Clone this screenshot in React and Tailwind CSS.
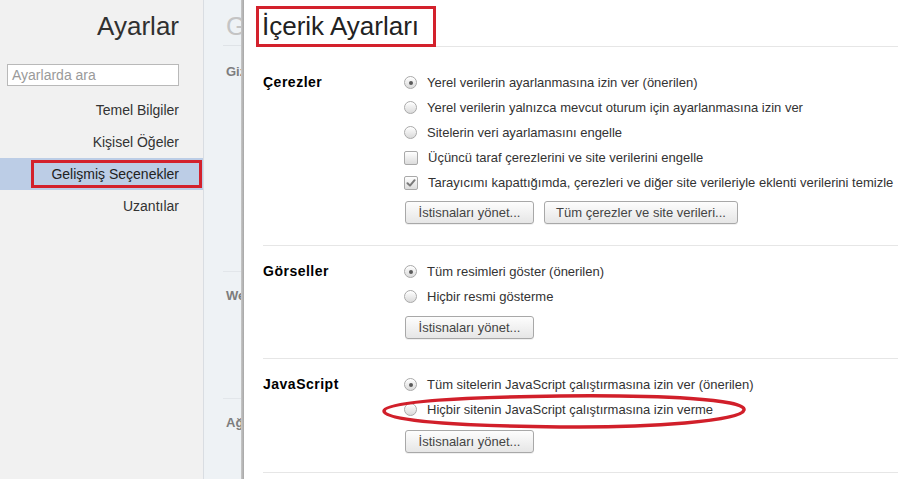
import React from "react";

const font = { fontFamily: '"Liberation Sans", Arial, sans-serif' };

function Radio({ checked }) {
  return (
    <span className="relative flex h-[13px] w-[13px] shrink-0 items-center justify-center rounded-full border border-[#a9a9a9] bg-gradient-to-b from-[#ffffff] to-[#dadada] shadow-[inset_0_1px_0_#fff]">
      {checked && <span className="h-[4px] w-[4px] rounded-full bg-[#5a5a5a]" />}
    </span>
  );
}

function Check({ checked }) {
  return (
    <span className="relative flex h-[14px] w-[14px] shrink-0 items-center justify-center rounded-[2px] border border-[#a9a9a9] bg-gradient-to-b from-[#ffffff] to-[#dcdcdc]">
      {checked && (
        <svg width="10" height="10" viewBox="0 0 10 10">
          <path d="M1.5 5.2 L4 7.6 L8.6 2.2" fill="none" stroke="#7a7a7a" strokeWidth="2" strokeLinecap="round" strokeLinejoin="round" />
        </svg>
      )}
    </span>
  );
}

function Option({ type = "radio", checked, children }) {
  return (
    <div className="flex h-[25px] items-center gap-[10px] whitespace-nowrap text-[13px] text-[#333]">
      {type === "radio" ? <Radio checked={checked} /> : <Check checked={checked} />}
      <span>{children}</span>
    </div>
  );
}

function Button({ children, w }) {
  return (
    <div
      className={`flex h-[23px] items-center justify-center rounded-[3px] border border-[#a8a8a8] bg-gradient-to-b from-[#fdfdfd] to-[#e6e6e6] text-[13px] text-[#444] shadow-[0_1px_0_rgba(0,0,0,0.06)] ${w}`}
    >
      {children}
    </div>
  );
}

function Section({ label, pt, btnMt, pb, children, buttons }) {
  return (
    <div className={`ml-[19px] flex border-b border-[#e6e6e6] ${pt} ${pb}`}>
      <div className="flex h-[25px] w-[141px] shrink-0 items-center text-[14px] font-bold tracking-[0.5px] text-black">
        {label}
      </div>
      <div className="flex flex-col">
        {children}
        <div className={`ml-[1px] flex gap-[10px] ${btnMt}`}>{buttons}</div>
      </div>
    </div>
  );
}

export default function App() {
  return (
    <div style={font} className="relative flex h-[479px] w-[898px] overflow-hidden bg-white">
      {/* Sidebar */}
      <div className="flex w-[204px] shrink-0 flex-col border-r border-[#d9dde2] bg-[#f1f1f1] pt-[11px]">
        <div className="pr-[24px] text-right text-[26px] leading-[30px] text-[#303030]">Ayarlar</div>
        <div className="ml-[7px] mt-[23px] flex h-[22px] w-[172px] items-center border border-[#b9b9b9] bg-white pl-[4px] text-[14px] text-[#9a9a9a]">
          Ayarlarda ara
        </div>
        <div className="mt-[8px] flex flex-col text-[14px] text-[#333]">
          <div className="flex h-[32px] items-center justify-end pr-[24px]">Temel Bilgiler</div>
          <div className="flex h-[32px] items-center justify-end pr-[24px]">Kişisel Öğeler</div>
          <div className="flex h-[32px] items-center justify-end bg-[#bccde6] pr-[1px]">
            <div className="flex h-[28px] items-center border-[3px] border-[#d3212c] pl-[17px] pr-[20px] text-[#222]">
              Gelişmiş Seçenekler
            </div>
          </div>
          <div className="flex h-[32px] items-center justify-end pr-[24px]">Uzantılar</div>
        </div>
      </div>

      {/* Underlying page strip */}
      <div className="flex w-[37px] shrink-0 flex-col overflow-hidden whitespace-nowrap bg-[#eef2f5]">
        <div className="ml-[19px] h-[46px] border-b border-[#dfe3e7] pl-[3px] pt-[11px] text-[26px] leading-[30px] text-[#c4c4c4]">
          Gelişmiş
        </div>
        <div className="ml-[19px] h-[226px] border-b border-[#e2e6ea] pl-[3px] pt-[16px] text-[13px] font-bold leading-[20px] text-[#7d7d7d]">
          Gizlilik
        </div>
        <div className="ml-[19px] h-[127px] border-b border-[#e2e6ea] pl-[3px] pt-[14px] text-[13px] font-bold leading-[20px] text-[#7d7d7d]">
          Web İçeriği
        </div>
        <div className="ml-[19px] pl-[3px] pt-[14px] text-[13px] font-bold leading-[20px] text-[#7d7d7d]">
          Ağ
        </div>
      </div>

      {/* Dialog shadow */}
      <div className="w-[3px] shrink-0 bg-gradient-to-r from-[#c8c8c8] to-[#a6a6a6]" />

      {/* Dialog */}
      <div className="flex flex-1 flex-col bg-white">
        <div className="relative ml-[12px] h-[47px] border-b border-[#e6e6e6]">
          <div className="absolute left-0 top-[6px] flex h-[41px] w-[180px] items-start border-[3px] border-[#d3212c] bg-white pl-[3px] pt-[2px] text-[26px] leading-[30px] text-[#222]">
            <span className="whitespace-nowrap">İçerik Ayarları</span>
          </div>
        </div>

        <Section
          label="Çerezler"
          pt="pt-[23px]"
          btnMt="mt-[6px]"
          pb="pb-[21px]"
          buttons={[
            <Button key="a" w="w-[129px]">İstisnaları yönet...</Button>,
            <Button key="b" w="w-[194px]">Tüm çerezler ve site verileri...</Button>,
          ]}
        >
          <Option checked>Yerel verilerin ayarlanmasına izin ver (önerilen)</Option>
          <Option>Yerel verilerin yalnızca mevcut oturum için ayarlanmasına izin ver</Option>
          <Option>Sitelerin veri ayarlamasını engelle</Option>
          <Option type="check">Üçüncü taraf çerezlerini ve site verilerini engelle</Option>
          <Option type="check" checked>
            Tarayıcımı kapattığımda, çerezleri ve diğer site verileriyle eklenti verilerini temizle
          </Option>
        </Section>

        <Section
          label="Görseller"
          pt="pt-[13px]"
          btnMt="mt-[7px]"
          pb="pb-[19px]"
          buttons={[<Button key="a" w="w-[129px]">İstisnaları yönet...</Button>]}
        >
          <Option checked>Tüm resimleri göster (önerilen)</Option>
          <Option>Hiçbir resmi gösterme</Option>
        </Section>

        <Section
          label="JavaScript"
          pt="pt-[13px]"
          btnMt="mt-[8px]"
          pb="pb-[19px]"
          buttons={[<Button key="a" w="w-[129px]">İstisnaları yönet...</Button>]}
        >
          <Option checked>Tüm sitelerin JavaScript çalıştırmasına izin ver (önerilen)</Option>
          <Option>Hiçbir sitenin JavaScript çalıştırmasına izin verme</Option>
        </Section>
      </div>

      {/* Red ellipse annotation */}
      <svg className="pointer-events-none absolute left-0 top-0" width="898" height="479" viewBox="0 0 898 479">
        <path
          d="M560 396 C 660 395, 746 399, 744 410 C 742 421, 650 428, 560 427 C 470 426, 384 422, 384 411 C 384 401, 470 397, 560 396 Z"
          fill="none"
          stroke="#d11f2a"
          strokeWidth="3.5"
        />
      </svg>
    </div>
  );
}
